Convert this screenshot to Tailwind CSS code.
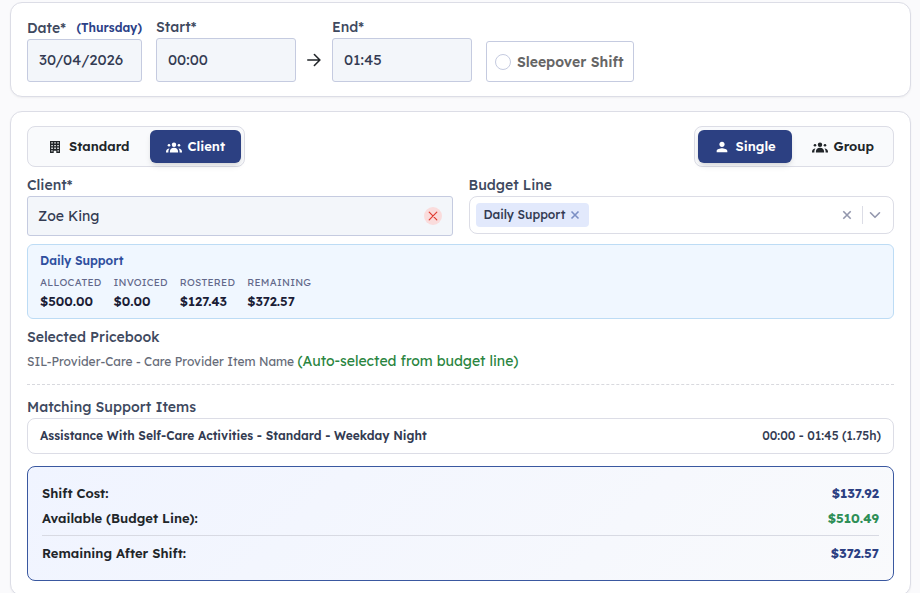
<!DOCTYPE html>
<html lang="en">
<head>
    <meta charset="UTF-8">
    <meta name="viewport" content="width=device-width, initial-scale=1.0">
    <title>Shift</title>
    <script src="https://cdn.jsdelivr.net/npm/@tailwindcss/browser@4"></script>
</head>
<body class="bg-[#fafafc] font-['Lexend','Inter',sans-serif] text-[#212529]">
    <main class="pt-0.5 pl-2.5 pr-[9px]">
        <!-- Date and time -->
        <section class="flex items-end gap-3.5 rounded-xl border border-[#dcdde6] bg-white px-4 pt-3.5 pb-3.5 shadow-xs">
            <div class="w-[115px]">
                <div class="flex h-[21px] items-start justify-between whitespace-nowrap">
                    <label for="date" class="text-sm leading-5 font-medium text-[#3f4a5f]">Date*</label>
                    <span class="text-xs leading-5 font-semibold text-[#2c4187]">(Thursday)</span>
                </div>
                <input id="date" type="text" value="30/04/2026" class="h-[43px] w-full rounded-[3px] border border-[#c5cbe0] bg-[#f3f6fa] px-[11px] pb-0.5 text-[15px] text-[#333b52]">
            </div>
            <div class="flex items-end">
                <div class="w-[140px]">
                    <label for="start" class="block h-[21px] text-sm leading-5 font-medium text-[#3f4a5f]">Start*</label>
                    <input id="start" type="text" value="00:00" class="h-11 w-full rounded-[3px] border border-[#c5cbe0] bg-[#f3f6fa] px-[11px] pb-0.5 text-[15px] text-[#333b52]">
                </div>
                <div class="flex h-11 w-9 items-center justify-center">
                    <svg class="size-4" viewBox="0 0 16 16" fill="none" stroke="#212529" stroke-width="1.6" stroke-linecap="round" stroke-linejoin="round"><path d="M1.800 8h12M8.400 2.500 13.900 8l-5.500 5.500"/></svg>
                </div>
                <div class="w-[140px]">
                    <label for="end" class="block h-[21px] text-sm leading-5 font-medium text-[#3f4a5f]">End*</label>
                    <input id="end" type="text" value="01:45" class="h-11 w-full rounded-[3px] border border-[#c5cbe0] bg-[#f3f6fa] px-[11px] pb-0.5 text-[15px] text-[#333b52]">
                </div>
            </div>
            <label class="flex h-[41px] w-[148px] items-center gap-1.5 rounded-[3px] border border-[#c5cbe0] px-2 text-sm font-semibold whitespace-nowrap text-[#666]">
                <input type="checkbox" class="size-4 shrink-0 appearance-none rounded-full border border-[#c5cbe0] bg-white checked:bg-[#2c4082]">
                Sleepover Shift
            </label>
        </section>

        <!-- Client, budget and cost -->
        <section class="mt-3.5 rounded-xl border border-[#dcdde6] bg-white px-4 py-3.5 shadow-xs">
            <div class="flex justify-between">
                <div class="flex gap-1 rounded-lg border border-[#dcdde6] bg-[#f9fafc] p-[3px] text-[13px] font-semibold">
                    <button type="button" class="flex h-[33px] items-center gap-1.5 rounded-md px-4">
                        <svg class="size-4" viewBox="0 0 16 16"><path fill="currentColor" fill-rule="evenodd" d="M3 2h10v12H9.300v-2.200H6.700V14H3zM4.300 3.200v1.300h1.500V3.200zm3 0v1.300h1.500V3.200zm3 0v1.300h1.500V3.200zm-6 2.700v1.300h1.500V5.900zm3 0v1.300h1.500V5.900zm3 0v1.300h1.500V5.900zm-6 2.700v1.300h1.500V8.600zm3 0v1.300h1.500V8.600zm3 0v1.300h1.500V8.600zm-6 2.700v1.300h1.300v-1.300zm6.200 0v1.300h1.300v-1.300z"/></svg>
                        Standard
                    </button>
                    <button type="button" class="flex h-[33px] items-center gap-1.5 rounded-md bg-[#2c4082] px-4 text-white shadow-md">
                        <svg class="size-4" viewBox="0 0 16 16" fill="currentColor"><circle cx="8" cy="5.800" r="2.200"/><circle cx="3" cy="6.200" r="1.300"/><circle cx="13" cy="6.200" r="1.300"/><path d="M3.900 13.500v-1c0-2.300 1.700-3.700 4.100-3.700s4.100 1.400 4.100 3.700v1zM0 13.500v-.7c0-1.900 1.300-3.100 3.500-3.300-.8.900-1.100 1.900-1.100 3.100v.9zM16 13.500v-.7c0-1.900-1.300-3.100-3.500-3.300.8.900 1.100 1.900 1.100 3.100v.9z"/></svg>
                        Client
                    </button>
                </div>
                <div class="flex gap-1 rounded-lg border border-[#dcdde6] bg-[#f9fafc] p-[3px] text-[13px] font-semibold">
                    <button type="button" class="flex h-[33px] items-center gap-1.5 rounded-md bg-[#2c4082] px-4 text-white shadow-md">
                        <svg class="size-4" viewBox="0 0 24 24" fill="currentColor"><path d="M12 12c2.210 0 4-1.790 4-4s-1.790-4-4-4-4 1.790-4 4 1.790 4 4 4zm0 2c-2.670 0-8 1.340-8 4v2h16v-2c0-2.660-5.330-4-8-4z"/></svg>
                        Single
                    </button>
                    <button type="button" class="flex h-[33px] items-center gap-1.5 rounded-md px-4">
                        <svg class="size-4" viewBox="0 0 16 16" fill="currentColor"><circle cx="8" cy="5.800" r="2.200"/><circle cx="3" cy="6.200" r="1.300"/><circle cx="13" cy="6.200" r="1.300"/><path d="M3.900 13.500v-1c0-2.300 1.700-3.700 4.100-3.700s4.100 1.400 4.100 3.700v1zM0 13.500v-.7c0-1.900 1.300-3.100 3.500-3.300-.8.900-1.100 1.900-1.100 3.100v.9zM16 13.500v-.7c0-1.900-1.300-3.100-3.500-3.300.8.900 1.100 1.900 1.100 3.100v.9z"/></svg>
                        Group
                    </button>
                </div>
            </div>

            <div class="mt-2 grid grid-cols-2 items-start gap-4">
                <div>
                    <label for="client" class="block h-[21px] text-sm leading-5 font-medium text-[#3f4a5f]">Client*</label>
                    <div class="flex h-10 items-center rounded-[3px] border border-[#c5cbe0] bg-[#f3f6fa] px-2.5">
                        <input id="client" type="text" value="Zoe King" class="min-w-0 flex-1 bg-transparent text-sm text-[#333b52]">
                        <button type="button" aria-label="Remove client" class="flex size-[18px] items-center justify-center rounded-full bg-[#fadcdc] text-[#e03c31]">
                            <svg class="size-2.5" viewBox="0 0 10 10" fill="none" stroke="currentColor" stroke-width="1.200" stroke-linecap="round"><path d="m1.200 1.200 7.600 7.600M8.800 1.200 1.200 8.800"/></svg>
                        </button>
                    </div>
                </div>
                <div>
                    <label for="budget" class="block h-[21px] text-sm leading-5 font-medium text-[#3f4a5f]">Budget Line</label>
                    <div class="flex h-[38px] items-center rounded-lg border border-[#dcdde6] bg-white px-1.5">
                        <div class="flex h-6 items-center gap-1 rounded bg-[#e2e9fc] px-2 text-xs font-medium whitespace-nowrap text-[#333b52]">
                            Daily Support
                            <button type="button" aria-label="Remove Daily Support" class="text-[#7b8fc4]">
                                <svg class="size-3" viewBox="0 0 12 12" fill="none" stroke="currentColor" stroke-width="1.600"><path d="m2.500 2.500 7 7M9.500 2.500l-7 7"/></svg>
                            </button>
                        </div>
                        <input id="budget" type="text" role="combobox" aria-expanded="false" class="min-w-0 flex-1 bg-transparent px-1 outline-none">
                        <button type="button" aria-label="Clear" class="px-2.5 text-[#9397ad]">
                            <svg class="size-2.5" viewBox="0 0 10 10" fill="none" stroke="currentColor" stroke-width="1.600"><path d="m1.300 1.300 7.400 7.400M8.700 1.300 1.300 8.700"/></svg>
                        </button>
                        <span class="h-[18px] w-px bg-[#dcdde6]"></span>
                        <button type="button" aria-label="Open list" class="px-1.5 text-[#9397ad]">
                            <svg class="size-3" viewBox="0 0 12 12" fill="none" stroke="currentColor" stroke-width="1.600" stroke-linecap="round" stroke-linejoin="round"><path d="m1.500 3.800 4.500 4.500 4.500-4.500"/></svg>
                        </button>
                    </div>
                </div>
            </div>

            <div class="mt-2 h-[75px] rounded-md border border-[#bddcf5] bg-[#f0f7ff] px-3 pt-2">
                <h3 class="text-xs leading-4 font-semibold text-[#2f4f9e]">Daily Support</h3>
                <dl class="mt-1 flex gap-3">
                    <div>
                        <dt class="pt-px text-[10px] leading-[18px] tracking-wide text-[#62688a]">ALLOCATED</dt>
                        <dd class="text-[13px] leading-[18px] font-semibold text-[#1b1d36]">$500.00</dd>
                    </div>
                    <div>
                        <dt class="pt-px text-[10px] leading-[18px] tracking-wide text-[#62688a]">INVOICED</dt>
                        <dd class="text-[13px] leading-[18px] font-semibold text-[#1b1d36]">$0.00</dd>
                    </div>
                    <div>
                        <dt class="pt-px text-[10px] leading-[18px] tracking-wide text-[#62688a]">ROSTERED</dt>
                        <dd class="text-[13px] leading-[18px] font-semibold text-[#1b1d36]">$127.43</dd>
                    </div>
                    <div>
                        <dt class="pt-px text-[10px] leading-[18px] tracking-wide text-[#62688a]">REMAINING</dt>
                        <dd class="text-[13px] leading-[18px] font-semibold text-[#1b1d36]">$372.57</dd>
                    </div>
                </dl>
            </div>

            <div class="border-b border-dashed border-[#d8d9de] pt-2 pb-3">
                <h3 class="text-sm leading-5 font-medium text-[#3f4a5f]">Selected Pricebook</h3>
                <p class="mt-1 text-xs leading-5 text-[#666b78]">SIL-Provider-Care - Care Provider Item Name <span class="text-sm text-[#2a8540]">(Auto-selected from budget line)</span></p>
            </div>

            <h3 class="mt-3 text-sm leading-5 font-medium text-[#3f4a5f]">Matching Support Items</h3>
            <div class="mt-px flex h-9 items-center justify-between rounded-lg border border-[#dcdde6] px-3 text-xs text-[#333b52]">
                <span class="font-semibold">Assistance With Self-Care Activities - Standard - Weekday Night</span>
                <span class="font-medium">00:00 - 01:45 (1.75h)</span>
            </div>

            <dl class="mt-3 rounded-lg border border-[#3a58a0] bg-linear-135 from-[#f0f4ff] to-[#f9fafc] p-3.5 text-[13px] leading-[25px] font-semibold">
                <div class="flex justify-between">
                    <dt>Shift Cost:</dt>
                    <dd class="font-bold text-[#2c4082]">$137.92</dd>
                </div>
                <div class="flex justify-between">
                    <dt>Available (Budget Line):</dt>
                    <dd class="font-bold text-[#2e8f57]">$510.49</dd>
                </div>
                <div class="mt-1 flex justify-between border-t border-[#d8dae3] pt-[5px]">
                    <dt>Remaining After Shift:</dt>
                    <dd class="font-bold text-[#2c4082]">$372.57</dd>
                </div>
            </dl>
        </section>
    </main>
</body>
</html>
